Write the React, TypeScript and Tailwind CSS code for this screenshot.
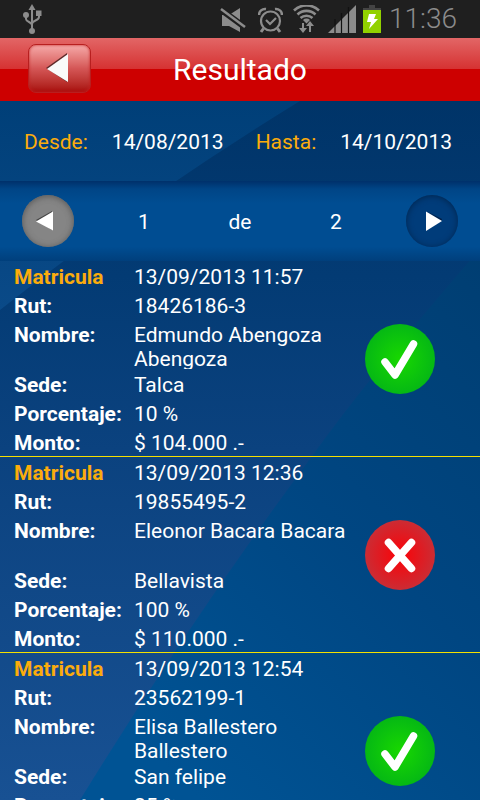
type Payment = {
  id: string;
  date: string;
  rut: string;
  name: string;
  campus: string;
  percent: string;
  amount: string;
  approved: boolean;
};

const payments: Payment[] = [
  {
    id: 'p1',
    date: '13/09/2013 11:57',
    rut: '18426186-3',
    name: 'Edmundo Abengoza Abengoza',
    campus: 'Talca',
    percent: '10 %',
    amount: '$ 104.000 .-',
    approved: true,
  },
  {
    id: 'p2',
    date: '13/09/2013 12:36',
    rut: '19855495-2',
    name: 'Eleonor Bacara Bacara',
    campus: 'Bellavista',
    percent: '100 %',
    amount: '$ 110.000 .-',
    approved: false,
  },
  {
    id: 'p3',
    date: '13/09/2013 12:54',
    rut: '23562199-1',
    name: 'Elisa Ballestero Ballestero',
    campus: 'San felipe',
    percent: '25 %',
    amount: '',
    approved: true,
  },
];

export default function App() {
  return (
    <div className="flex h-screen flex-col overflow-hidden bg-[#00427c] font-['Roboto',sans-serif] text-[21px] text-white">
      <StatusBar />
      <Header title="Resultado" />
      <main className="relative flex min-h-0 flex-1 flex-col">
        <Backdrop />
        <DateRange from="14/08/2013" to="14/10/2013" />
        <Pager page={1} total={2} />
        <ul className="relative min-h-0 flex-1 overflow-y-auto [scrollbar-width:none]">
          {payments.map((p) => (
            <PaymentRow key={p.id} payment={p} />
          ))}
        </ul>
      </main>
    </div>
  );
}

function StatusBar() {
  return (
    <div className="flex h-[38px] shrink-0 items-center justify-between bg-[#1f1f1f] pr-[23px] pl-[22px] text-[#8c8c8c]">
      <svg width="20" height="30" viewBox="0 0 20 30" fill="none" stroke="currentColor" strokeWidth="2">
        <path d="M10 4v21M4 11v4c0 3 6 3 6 6M17 10v3c0 4-7 3-7 7" />
        <path d="M10 0l3.500 6h-7z" fill="currentColor" stroke="none" />
        <circle cx="10" cy="27" r="3" fill="currentColor" stroke="none" />
        <circle cx="4" cy="11" r="3" fill="currentColor" stroke="none" />
        <rect x="14" y="6.500" width="5.500" height="5.500" fill="currentColor" stroke="none" />
      </svg>
      <div className="flex items-center">
        <svg className="mr-3" width="26" height="28" viewBox="0 0 26 28" fill="currentColor">
          <path d="M2 10h7L20 3v24L9 21H2z" />
          <path d="M0 4L26 23" stroke="#1f1f1f" strokeWidth="6" />
          <path d="M1 4L25 22" stroke="currentColor" strokeWidth="2.500" />
        </svg>
        <svg className="mr-2.5" width="25" height="28" viewBox="0 0 25 28" fill="none" stroke="currentColor">
          <circle cx="12.500" cy="16" r="9.500" strokeWidth="2.200" />
          <path d="M8 15l4 4 6-6" strokeWidth="2.200" />
          <path d="M5.500 23.500L3 27M19.500 23.500L22 27" strokeWidth="3" />
          <path d="M1 10a6 6 0 0 1 7-6M24 10a6 6 0 0 0-7-6" strokeWidth="2.500" />
        </svg>
        <svg className="mr-2" width="27" height="28" viewBox="0 0 27 28" fill="none" stroke="currentColor">
          <path d="M1 5.500a18 18 0 0 1 25 0M4.500 9.500a13 13 0 0 1 18 0M7.500 13a9 9 0 0 1 12 0" strokeWidth="2.600" />
          <path d="M10 15a5 5 0 0 1 7 0l-3.500 3.500z" fill="currentColor" stroke="none" />
          <path d="M10 18v6M17 27v-7" strokeWidth="2" />
          <path d="M6 23h8l-4 5zM13 21h8l-4-5z" fill="currentColor" stroke="none" />
        </svg>
        <svg className="mr-[7px]" width="28" height="28" viewBox="0 0 28 28" fill="currentColor">
          <path d="M28 0v28H0z" />
          <path d="M7 14v14M13.500 8v20M20.500 2v26" stroke="#111111" strokeWidth="1.200" />
        </svg>
        <svg className="mr-2" width="18" height="28" viewBox="0 0 18 28">
          <rect x="6" y="0" width="6" height="3" fill="#444444" />
          <rect x="0" y="3" width="18" height="3" fill="#444444" />
          <rect x="0" y="5" width="18" height="23" fill="#91d100" />
          <path d="M6 9h7l-2 5h4L6 24l2-7H4z" fill="#fff" />
        </svg>
        <time className="text-[28px] font-light leading-none">11:36</time>
      </div>
    </div>
  );
}

function Header({ title }: { title: string }) {
  return (
    <header className="relative flex h-[63px] shrink-0 items-center justify-center bg-[linear-gradient(#e26666,#d63232_49%,#cd0000_50%,#cd0000)]">
      <button
        type="button"
        aria-label="Volver"
        className="absolute top-1.5 left-7 flex h-[49px] w-[63px] items-center justify-center rounded-lg border border-[#b81f1f] bg-linear-to-b from-[#f5a9a9] via-[#d45656] to-[#a80808] shadow-[inset_0_0_3px_#c42020]"
      >
        <svg className="mr-1" width="23" height="31" viewBox="0 0 23 31">
          <path d="M0 15L21 0v29z" fill="#5e2a2a" />
          <path d="M1 16L22 1v28z" fill="#fafafa" />
        </svg>
      </button>
      <h1 className="text-[30px] leading-none">{title}</h1>
    </header>
  );
}

// diagonal bands behind the whole content area
function Backdrop() {
  return (
    <svg className="absolute inset-0 h-full w-full" viewBox="0 0 480 699" preserveAspectRatio="none">
      <defs>
        <linearGradient id="band-left" x1="0" y1="0" x2="0" y2="1">
          <stop offset="0" stopColor="#003f78" />
          <stop offset="1" stopColor="#0a4a88" />
        </linearGradient>
        <linearGradient id="band-mid" x1="0" y1="0" x2="0" y2="1">
          <stop offset="0" stopColor="#003468" />
          <stop offset="0.250" stopColor="#033b74" />
          <stop offset="0.500" stopColor="#0b427f" />
          <stop offset="1" stopColor="#185193" />
        </linearGradient>
        <linearGradient id="band-right" x1="1" y1="0" x2="0.300" y2="1">
          <stop offset="0" stopColor="#003e72" />
          <stop offset="0.500" stopColor="#004682" />
          <stop offset="1" stopColor="#005394" />
        </linearGradient>
      </defs>
      <rect width="480" height="699" fill="url(#band-mid)" />
      <path d="M0 0H300Q140 98 0 209z" fill="url(#band-left)" />
      <path d="M480 148Q370 274 310 358Q190 520 80 699H480z" fill="url(#band-right)" />
    </svg>
  );
}

function DateRange({ from, to }: { from: string; to: string }) {
  return (
    <section className="relative flex h-20 shrink-0 items-center justify-between px-6 pt-1">
      <p className="flex gap-6">
        <span className="text-[#fbac0c]">Desde:</span>
        <time>{from}</time>
      </p>
      <p className="flex gap-6 pr-1">
        <span className="text-[#fbac0c]">Hasta:</span>
        <time>{to}</time>
      </p>
    </section>
  );
}

function Pager({ page, total }: { page: number; total: number }) {
  return (
    <nav
      aria-label="Paginas"
      className="relative grid h-20 shrink-0 grid-cols-5 items-center justify-items-center bg-[linear-gradient(#00306a,#004586_10%,#004d92_28%,#004d92_82%,#003f7c)]"
    >
      <button
        type="button"
        aria-label="Anterior"
        className="flex size-[52px] items-center justify-center rounded-full bg-[#858585] shadow-[inset_0_1px_6px_#555555]"
      >
        <svg className="mr-1.5" width="18" height="21" viewBox="0 0 18 21">
          <path d="M0 9L16 0v19z" fill="#444444" />
          <path d="M0 10.500L17 0.500v19z" fill="#fff" />
        </svg>
      </button>
      <span className="pt-1">{page}</span>
      <span className="pt-1">de</span>
      <span className="pt-1">{total}</span>
      <button
        type="button"
        aria-label="Siguiente"
        className="flex size-[52px] items-center justify-center rounded-full bg-[#003c7a] shadow-[inset_0_1px_6px_#00264f]"
      >
        <svg className="ml-1" width="18" height="21" viewBox="0 0 18 21">
          <path d="M1 0l16 8v2z" fill="#00204a" />
          <path d="M1 0.500l16 9.500L1 20z" fill="#fff" />
        </svg>
      </button>
    </nav>
  );
}

function PaymentRow({ payment }: { payment: Payment }) {
  return (
    <li className="flex items-center border-b border-[#f5e000] pr-[45px] pl-3.5">
      <dl className="grid flex-1 grid-cols-[120px_1fr] leading-[25px] *:pt-1">
        <dt className="font-bold text-[#fbac0c]">Matricula</dt>
        <dd>{payment.date}</dd>
        <dt className="font-bold">Rut:</dt>
        <dd>{payment.rut}</dd>
        <dt className="font-bold">Nombre:</dt>
        <dd className="h-[50px] overflow-hidden pr-2 leading-6">{payment.name}</dd>
        <dt className="font-bold">Sede:</dt>
        <dd>{payment.campus}</dd>
        <dt className="font-bold">Porcentaje:</dt>
        <dd>{payment.percent}</dd>
        <dt className="font-bold">Monto:</dt>
        <dd>{payment.amount}</dd>
      </dl>
      <StatusIcon approved={payment.approved} />
    </li>
  );
}

function StatusIcon({ approved }: { approved: boolean }) {
  return (
    <svg
      className="size-[70px] shrink-0"
      viewBox="0 0 70 70"
      fill="none"
      role="img"
      aria-label={approved ? 'Aprobado' : 'Rechazado'}
    >
      <defs>
        <radialGradient id="ok-fill">
          <stop offset="0" stopColor="#18d800" />
          <stop offset="1" stopColor="#05b814" />
        </radialGradient>
        <radialGradient id="error-fill">
          <stop offset="0.200" stopColor="#f30a10" />
          <stop offset="1" stopColor="#cb2c34" />
        </radialGradient>
      </defs>
      <circle cx="35" cy="35" r="35" fill={approved ? 'url(#ok-fill)' : 'url(#error-fill)'} />
      {approved ? (
        <path d="M20 38l10 13L48.500 20" stroke="#fff" strokeWidth="7.500" strokeLinecap="round" strokeLinejoin="round" />
      ) : (
        <path d="M23.500 22.500l23 26M46.500 22.500l-23 26" stroke="#fff" strokeWidth="7.500" strokeLinecap="round" />
      )}
    </svg>
  );
}
